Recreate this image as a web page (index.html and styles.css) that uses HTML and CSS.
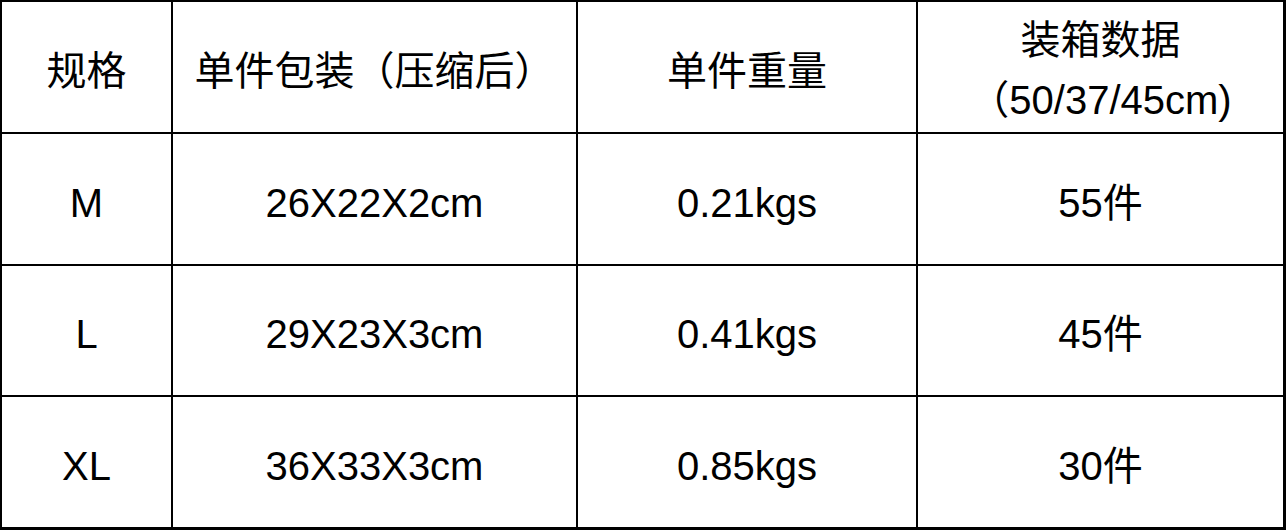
FILE: index.html
```html
<!DOCTYPE html>
<html lang="zh-CN">
<head>
<meta charset="utf-8">
<title>装箱数据</title>
<link rel="stylesheet" href="styles.css">
</head>
<body>
<table class="spec">
  <thead>
    <tr class="row row-head">
      <th class="c1">规格</th>
      <th class="c2">单件包装（压缩后）</th>
      <th class="c3">单件重量</th>
      <th class="c4 two-line">装箱数据<br>（50/37/45cm)</th>
    </tr>
  </thead>
  <tbody>
    <tr class="row">
      <td>M</td>
      <td>26X22X2cm</td>
      <td>0.21kgs</td>
      <td class="last-col">55件</td>
    </tr>
    <tr class="row row-short">
      <td>L</td>
      <td>29X23X3cm</td>
      <td>0.41kgs</td>
      <td class="last-col">45件</td>
    </tr>
    <tr class="row row-last">
      <td>XL</td>
      <td>36X33X3cm</td>
      <td>0.85kgs</td>
      <td class="last-col">30件</td>
    </tr>
  </tbody>
</table>
</body>
</html>
```

FILE: styles.css
```css
html, body {
  margin: 0;
  padding: 0;
  background: #fff;
}

.spec {
  width: 1286px;
  table-layout: fixed;
  border-collapse: separate;
  border-spacing: 0;
  border-top: 2px solid #000;
  border-left: 2px solid #000;
  box-sizing: border-box;
  font-family: "Liberation Sans", "Noto Sans CJK SC", sans-serif;
  font-size: 40px;
  color: #000;
}

.spec th,
.spec td {
  box-sizing: border-box;
  padding: 7px 0 0;
  border-right: 2px solid #000;
  border-bottom: 2px solid #000;
  text-align: center;
  vertical-align: middle;
  font-weight: normal;
  line-height: 48px;
  white-space: nowrap;
}

.spec .c1 { width: 171px; }
.spec .c2 { width: 405px; }
.spec .c3 { width: 340px; }
.spec .c4 { width: 368px; }

.spec .c4,
.spec .last-col {
  border-right-width: 3px;
}

.row th,
.row td {
  height: 132px;
}

.row-short td {
  height: 131px;
}

.row-last td {
  height: 133px;
  border-bottom-width: 3px;
}

.spec .two-line {
  padding-top: 5px;
  line-height: 60px;
}
```
